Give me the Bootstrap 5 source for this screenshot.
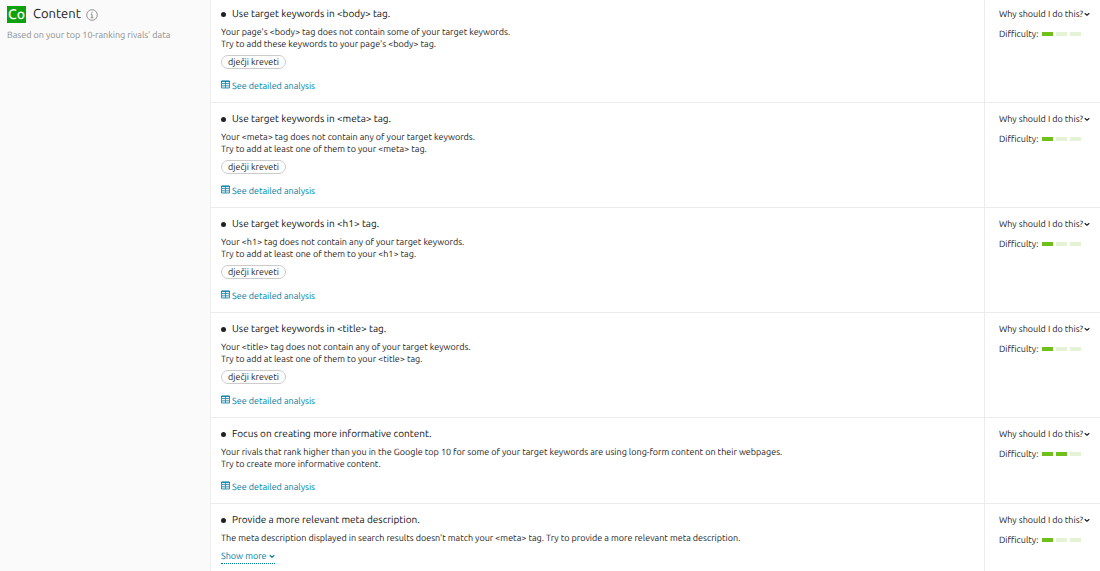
<!DOCTYPE html>
<html lang="en">
<head>
<meta charset="utf-8">
<meta name="viewport" content="width=device-width, initial-scale=1">
<title>Content ideas</title>
<link href="https://cdn.jsdelivr.net/npm/bootstrap@5.3.0/dist/css/bootstrap.min.css" rel="stylesheet">
<style>
  body { font-family: Ubuntu, "Noto Sans", sans-serif; text-rendering: geometricPrecision; font-size: 9px; line-height: 12px; color: #222; background: #fff; }
  button { text-rendering: inherit; }
  .page { min-height: 100vh; }
  .side { flex: 0 0 211px; background: #fafafa; border-right: 1px solid #f0f0f0; padding: 4px 7px; }
  .logo { width: 19px; height: 17px; background: #0ea10e; color: #fff; font-size: 14px; line-height: 17px; font-weight: 500; }
  .side h1 { font-size: 13px; line-height: 20px; color: #222; margin: 0 5px 0 7px; }
  .side-note { color: #8c8c8c; margin-top: 5px; }
  .info { color: #888; margin-top: 2px; }
  .idea { border-bottom: 1px solid #ececec; }
  .idea-main { padding: 8px 10px; min-width: 0; }
  .idea-side { flex: 0 0 116px; border-left: 1px solid #ececec; padding: 8px 10px 8px 14px; }
  .idea:first-child > div { padding-top: 6px; }
  .idea h2 { font-size: 10px; line-height: 16px; color: #111; gap: 6px; }
  .dot { width: 5px; height: 5px; background: #222; }
  .keyword { display: table; margin-top: 5px; height: 14px; line-height: 12px; padding: 0 6px; border: 1px solid #ccc; }
  .analysis { display: flex; width: max-content; line-height: 16px; margin-top: 9px; gap: 2px; color: #007ca3; text-decoration: none; }
  .analysis svg { margin-top: 2px; }
  .more { line-height: 14px; margin-top: 5px; color: #007ca3; border-bottom: 1px dotted #007ca3 !important; gap: 2px; }
  .why { line-height: 16px; color: #222; gap: 1px; white-space: nowrap; }
  .difficulty { gap: 4px; line-height: 16px; margin-top: 4px; }
  .bars { gap: 3px; }
  .bars i { width: 11px; height: 4px; background: #e4f3d5; }
  .bars .on { background: #70c01c; }
</style>
</head>
<body>
<svg class="d-none" xmlns="http://www.w3.org/2000/svg">
  <symbol id="grid" viewBox="0 0 9 9"><path d="M.5 1h8v7h-8z" fill="#e6f4f8" stroke="currentColor" stroke-width=".8"/><path d="M.5 1.3h8" stroke="currentColor"/><path d="M1 3.5h7M1 5.8h7M4.5 1v7" fill="none" stroke="currentColor" stroke-width=".7"/></symbol>
  <symbol id="chev" viewBox="0 0 6 6"><path d="M.7 2.2 3 4.2 5.3 2.2" fill="none" stroke="currentColor" stroke-width="1.2"/></symbol>
</svg>
<div class="page d-flex">
  <aside class="side">
    <div class="d-flex align-items-center">
      <span class="logo text-center">Co</span>
      <h1 class="fw-normal">Content</h1>
      <svg class="info" width="12" height="12" viewBox="0 0 12 12" fill="none" stroke="currentColor"><circle cx="6" cy="6" r="5.3" stroke-width=".9"/><path d="M6 2.8v1.1M4.8 5.2H6v3.4M4.7 8.7h2.7"/></svg>
    </div>
    <p class="side-note mb-0">Based on your top 10-ranking rivals' data</p>
  </aside>
  <main class="flex-grow-1" id="ideas"></main>
</div>
<script>
  const ideas = [
    { title: "Use target keywords in <body> tag.", lines: ["Your page's <body> tag does not contain some of your target keywords.", "Try to add these keywords to your page's <body> tag."], keyword: true, level: 1 },
    ...["meta", "h1", "title"].map(t => ({ title: `Use target keywords in <${t}> tag.`, lines: [`Your <${t}> tag does not contain any of your target keywords.`, `Try to add at least one of them to your <${t}> tag.`], keyword: true, level: 1 })),
    { title: "Focus on creating more informative content.", lines: ["Your rivals that rank higher than you in the Google top 10 for some of your target keywords are using long-form content on their webpages.", "Try to create more informative content."], level: 2 },
    { title: "Provide a more relevant meta description.", lines: ["The meta description displayed in search results doesn't match your <meta> tag. Try to provide a more relevant meta description."], more: true, level: 1 }
  ];
  const esc = s => s.replace(/</g, "&lt;").replace(/>/g, "&gt;");
  const chev = '<svg width="6" height="6"><use href="#chev"/></svg>';
  document.getElementById("ideas").innerHTML = ideas.map(d => `
    <article class="idea d-flex">
      <div class="idea-main flex-grow-1">
        <h2 class="d-flex align-items-center fw-normal mb-1"><span class="dot rounded-circle"></span>${esc(d.title)}</h2>
        <p class="mb-0">${d.lines.map(esc).join("<br>")}</p>
        ${d.keyword ? '<span class="keyword rounded-pill">dječji kreveti</span>' : ""}
        ${d.more ? `<button type="button" class="more d-flex align-items-center border-0 bg-transparent p-0">Show more ${chev}</button>`
                 : '<a class="analysis" href="#"><svg width="9" height="9"><use href="#grid"/></svg>See detailed analysis</a>'}
      </div>
      <div class="idea-side">
        <button type="button" class="why d-flex align-items-center border-0 bg-transparent p-0">Why should I do this? ${chev}</button>
        <div class="difficulty d-flex align-items-center">Difficulty: <span class="bars d-flex">${[1, 2, 3].map(n => `<i class="${n <= d.level ? "on" : ""}"></i>`).join("")}</span></div>
      </div>
    </article>`).join("");
</script>
</body>
</html>
